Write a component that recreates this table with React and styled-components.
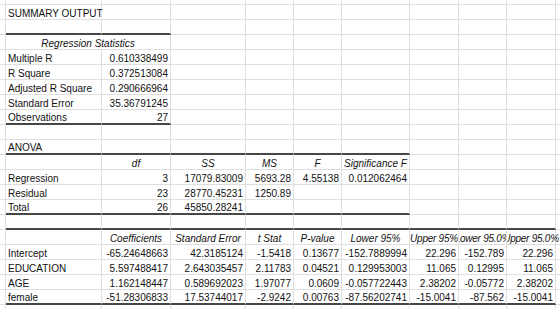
import React from 'react';
import styled, { createGlobalStyle } from 'styled-components';

const GlobalStyle = createGlobalStyle`
  html,
  body {
    margin: 0;
    padding: 0;
    background: #fff;
  }

  body {
    overflow: hidden;
    font-family: 'Liberation Sans', Arial, sans-serif;
  }
`;

// edge column + A..I, column J takes what is left
const COLS = [6, 96, 69, 75, 48, 48, 68, 49, 48, 49];
const DATA_COLS = 9;

const Sheet = styled.div`
  display: grid;
  grid-template-columns: ${COLS.map((w) => `${w}px`).join(' ')} 1fr;
  grid-template-rows: 5px;
  grid-auto-rows: 15px;
  width: 560px;
  height: 309px;
  overflow: hidden;
  font-size: 10px;
  color: #111;
`;

const justify = { left: 'flex-start', right: 'flex-end', center: 'center' };

const Cell = styled.div`
  box-sizing: border-box;
  grid-column: span ${({ $span }) => $span || 1};
  display: flex;
  align-items: flex-end;
  justify-content: ${({ $align }) => justify[$align] || 'flex-start'};
  padding: ${({ $align }) => ($align === 'center' ? '0 1px' : '0 2px')};
  border-right: ${({ $last }) => ($last ? 'none' : '1px solid #dedede')};
  border-bottom: ${({ $rule }) => ($rule ? '2px solid #474747' : '1px solid #dedede')};
  font-style: ${({ $italic }) => ($italic ? 'italic' : 'normal')};
  letter-spacing: ${({ $tight }) => ($tight ? '-0.25px' : 'normal')};
  line-height: 11px;
  white-space: nowrap;
  overflow: ${({ $spill }) => ($spill ? 'visible' : 'hidden')};
  clip-path: ${({ $spill }) => ($spill ? 'inset(0 -20px 0 0)' : 'none')};
`;

const num = (t) => ({ t, align: 'right' });
const head = (t, extra = {}) => ({ t, align: 'center', italic: true, ...extra });

const rows = [
  { cells: [] },
  { cells: [{ t: 'SUMMARY OUTPUT', spill: true }] },
  { cells: [], rule: 2 },
  { cells: [head('Regression Statistics', { span: 2 })] },
  { cells: ['Multiple R', num('0.610338499')] },
  { cells: ['R Square', num('0.372513084')] },
  { cells: ['Adjusted R Square', num('0.290666964')] },
  { cells: ['Standard Error', num('35.36791245')] },
  { cells: ['Observations', num('27')], rule: 2 },
  { cells: [] },
  { cells: ['ANOVA'], rule: 6 },
  { cells: [null, head('df'), head('SS'), head('MS'), head('F'), head('Significance F')] },
  {
    cells: ['Regression', num('3'), num('17079.83009'), num('5693.28'), num('4.55138'), num('0.012062464')],
  },
  { cells: ['Residual', num('23'), num('28770.45231'), num('1250.89')] },
  { cells: ['Total', num('26'), num('45850.28241')], rule: 6 },
  { cells: [], rule: 9 },
  {
    cells: [
      null,
      head('Coefficients'),
      head('Standard Error'),
      head('t Stat'),
      head('P-value'),
      head('Lower 95%'),
      head('Upper 95%', { tight: true }),
      head('Lower 95.0%', { tight: true }),
      head('Upper 95.0%', { tight: true, spill: true }),
    ],
  },
  {
    cells: [
      'Intercept',
      num('-65.24648663'),
      num('42.3185124'),
      num('-1.5418'),
      num('0.13677'),
      num('-152.7889994'),
      num('22.296'),
      num('-152.789'),
      num('22.296'),
    ],
  },
  {
    cells: [
      'EDUCATION',
      num('5.597488417'),
      num('2.643035457'),
      num('2.11783'),
      num('0.04521'),
      num('0.129953003'),
      num('11.065'),
      num('0.12995'),
      num('11.065'),
    ],
  },
  {
    cells: [
      'AGE',
      num('1.162148447'),
      num('0.589692023'),
      num('1.97077'),
      num('0.0609'),
      num('-0.057722443'),
      num('2.38202'),
      num('-0.05772'),
      num('2.38202'),
    ],
  },
  {
    cells: [
      'female',
      num('-51.28306833'),
      num('17.53744017'),
      num('-2.9242'),
      num('0.00763'),
      num('-87.56202741'),
      num('-15.0041'),
      num('-87.562'),
      num('-15.0041'),
    ],
    rule: 9,
  },
  { cells: [] },
];

const SheetRow = ({ row }) => {
  const out = [<Cell key="edge" />];
  let col = 0;
  let i = 0;
  while (col < DATA_COLS) {
    const raw = row.cells[i];
    const cell = typeof raw === 'string' ? { t: raw } : raw || {};
    const span = cell.span || 1;
    out.push(
      <Cell
        key={col}
        $span={span}
        $align={cell.align}
        $italic={cell.italic}
        $spill={cell.spill}
        $tight={cell.tight}
        $rule={row.rule && col < row.rule}
      >
        {cell.t}
      </Cell>
    );
    col += span;
    i += 1;
  }
  out.push(<Cell key="j" $last />);
  return out;
};

const App = () => (
  <>
    <GlobalStyle />
    <Sheet>
      {rows.map((row, i) => (
        <SheetRow key={i} row={row} />
      ))}
    </Sheet>
  </>
);

export default App;
